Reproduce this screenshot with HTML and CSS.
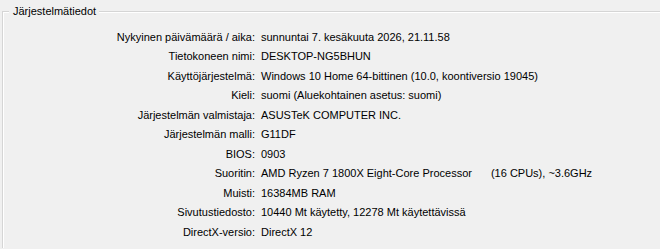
FILE: index.html
```html
<!DOCTYPE html>
<html>
<head>
<meta charset="utf-8">
<link rel="stylesheet" href="styles.css">
</head>
<body>
<div class="group">
  <div class="legend">Järjestelmätiedot</div>
  <div class="info">
    <div class="label">Nykyinen päivämäärä / aika:</div><div class="value">sunnuntai 7. kesäkuuta 2026, 21.11.58</div>
    <div class="label">Tietokoneen nimi:</div><div class="value">DESKTOP-NG5BHUN</div>
    <div class="label">Käyttöjärjestelmä:</div><div class="value">Windows 10 Home 64-bittinen (10.0, koontiversio 19045)</div>
    <div class="label">Kieli:</div><div class="value">suomi (Aluekohtainen asetus: suomi)</div>
    <div class="label">Järjestelmän valmistaja:</div><div class="value">ASUSTeK COMPUTER INC.</div>
    <div class="label">Järjestelmän malli:</div><div class="value">G11DF</div>
    <div class="label">BIOS:</div><div class="value">0903</div>
    <div class="label">Suoritin:</div><div class="value">AMD Ryzen 7 1800X Eight-Core Processor<span class="cpus">(16 CPUs), ~3.6GHz</span></div>
    <div class="label">Muisti:</div><div class="value">16384MB RAM</div>
    <div class="label">Sivutustiedosto:</div><div class="value">10440 Mt käytetty, 12278 Mt käytettävissä</div>
    <div class="label">DirectX-versio:</div><div class="value">DirectX 12</div>
  </div>
</div>
</body>
</html>
```
FILE: styles.css
```css
html, body {
  margin: 0;
  padding: 0;
  background: #f0f0f0;
  width: 660px;
  height: 249px;
  overflow: hidden;
}
body {
  font-family: "Liberation Sans", Arial, sans-serif;
  font-size: 11px;
  color: #000;
  padding: 11px 0 0 2px;
  box-sizing: border-box;
}
.group {
  position: relative;
  border-top: 1px solid #d5d5d5;
  border-left: 1px solid #d5d5d5;
  box-shadow: inset 1px 1px 0 #fff;
  height: 237px;
  box-sizing: border-box;
}
.legend {
  position: absolute;
  top: -7px;
  left: 6px;
  padding: 0 3px 0 4px;
  background: #f0f0f0;
  line-height: 13px;
}
.info {
  display: grid;
  grid-template-columns: 252px 1fr;
  column-gap: 6px;
  grid-auto-rows: 19.5px;
  padding-top: 15px;
  align-items: center;
}
.label {
  text-align: right;
  white-space: nowrap;
}
.value {
  white-space: nowrap;
}
.cpus {
  margin-left: 19px;
}
```
